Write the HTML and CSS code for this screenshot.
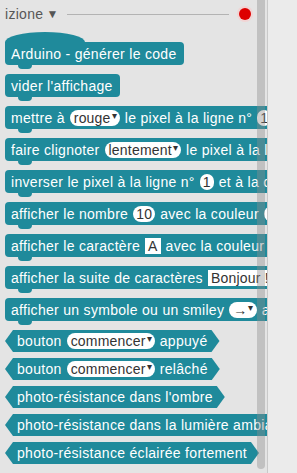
FILE: index.html
```html
<!DOCTYPE html>
<html lang="fr">
<head>
    <meta charset="UTF-8">
    <meta name="viewport" content="width=device-width, initial-scale=1.0">
    <title>Blocs micro:bit</title>
    <link rel="stylesheet" href="styles.css">
</head>
<body>
    <div class="app">
        <!-- Block palette -->
        <div class="flyout">
            <div class="cat-header">
                <span class="cat-name">izione</span>
                <span class="caret">▼</span>
                <span class="rule"></span>
                <span class="dot"></span>
            </div>

            <div class="blocks">
                <div class="block hat">Arduino - générer le code</div>
                <div class="block stmt">vider l'affichage</div>
                <div class="block stmt">mettre à <span class="dd">rouge<i>▾</i></span> le pixel à la ligne n° <span class="num">1</span> et à la colonne</div>
                <div class="block stmt">faire clignoter <span class="dd">lentement<i>▾</i></span> le pixel à la ligne</div>
                <div class="block stmt">inverser le pixel à la ligne n° <span class="num">1</span> et à la colonne</div>
                <div class="block stmt">afficher le nombre <span class="num">10</span> avec la couleur <span class="dd">rouge<i>▾</i></span></div>
                <div class="block stmt">afficher le caractère <span class="txt">A</span> avec la couleur <span class="dd">rouge<i>▾</i></span></div>
                <div class="block stmt">afficher la suite de caractères <span class="txt">Bonjour !</span></div>
                <div class="block stmt">afficher un symbole ou un smiley <span class="dd">→<i>▾</i></span> avec</div>
                <div class="block bool">bouton <span class="dd">commencer<i>▾</i></span> appuyé</div>
                <div class="block bool">bouton <span class="dd">commencer<i>▾</i></span> relâché</div>
                <div class="block bool">photo-résistance dans l'ombre</div>
                <div class="block bool">photo-résistance dans la lumière ambiante</div>
                <div class="block bool">photo-résistance éclairée fortement</div>
            </div>

            <div class="scroll-thumb"></div>
        </div>

        <!-- Workspace -->
        <div class="workspace"></div>
    </div>
</body>
</html>
```

FILE: styles.css
```css
body {
    margin: 0;
    background: #ebebeb;
    font-family: "Liberation Sans", Arial, sans-serif;
    overflow: hidden;
}

.app {
    display: flex;
    height: 473px;
}

/* Palette */
.flyout {
    position: relative;
    width: 267px;
    flex-shrink: 0;
    overflow: hidden;
    background: #e4e4e4;
}

.cat-header {
    display: flex;
    align-items: center;
    height: 32px;
    padding: 0 16px 4px 5px;
    box-sizing: border-box;
    color: #575757;
    font-size: 14px;
    letter-spacing: 0.3px;
}

.caret {
    font-size: 12px;
    margin-left: 3px;
    color: #555;
}

.rule {
    flex: 1;
    height: 1px;
    margin: 0 10px 0 8px;
    background: #b3b3b3;
}

.dot {
    width: 12px;
    height: 12px;
    border-radius: 50%;
    background: #dd0000;
    box-shadow: 0 0 0 2px #f1d4d4;
}

.blocks {
    display: flex;
    flex-direction: column;
    align-items: flex-start;
    padding-left: 5px;
}

/* Blocks */
.block {
    position: relative;
    display: flex;
    align-items: center;
    flex-shrink: 0;
    gap: 5px;
    height: 23px;
    padding: 0 7px 0 6px;
    background: #1f8a9b;
    color: #fff;
    font-size: 14px;
    letter-spacing: 0.3px;
    white-space: nowrap;
    border-radius: 4px;
}

.stmt,
.hat {
    margin-bottom: 9px;
}

.stmt::after,
.hat::after {
    content: "";
    position: absolute;
    left: 13px;
    top: 100%;
    width: 14px;
    height: 4px;
    background: #1f8a9b;
    border-radius: 0 0 6px 6px;
}

.hat {
    margin-top: 10px;
    border-top-left-radius: 0;
}

.hat::before {
    content: "";
    position: absolute;
    left: 0;
    bottom: 100%;
    width: 80px;
    height: 10px;
    background: #1f8a9b;
    border-radius: 50% 50% 0 0 / 100% 100% 0 0;
}

.bool {
    height: 22px;
    padding: 0 12px;
    margin-bottom: 6px;
    border-radius: 0;
    clip-path: polygon(0 50%, 8px 0, calc(100% - 8px) 0, 100% 50%, calc(100% - 8px) 100%, 8px 100%);
}

/* Fields */
.dd,
.num,
.txt {
    display: inline-flex;
    align-items: center;
    height: 16px;
    background: #fff;
    color: #333;
    font-size: 14px;
    letter-spacing: 0.2px;
}

.dd {
    padding: 0 3px 0 4px;
    border-radius: 8px;
}

.dd i {
    font-style: normal;
    font-size: 10px;
    margin-left: 1px;
    margin-top: -5px;
}

.num {
    min-width: 8px;
    justify-content: center;
    padding: 0 3px;
    border-radius: 8px;
}

.txt {
    padding: 0 3px;
}

/* Scrollbar overlay */
.scroll-thumb {
    position: absolute;
    top: 0;
    right: 2px;
    bottom: 4px;
    width: 8px;
    border-radius: 0 0 4px 4px;
    background: rgba(140, 140, 140, 0.4);
}

.workspace {
    flex: 1;
    border-left: 1px solid #c9c9c9;
    background: #ebebeb;
}
```
